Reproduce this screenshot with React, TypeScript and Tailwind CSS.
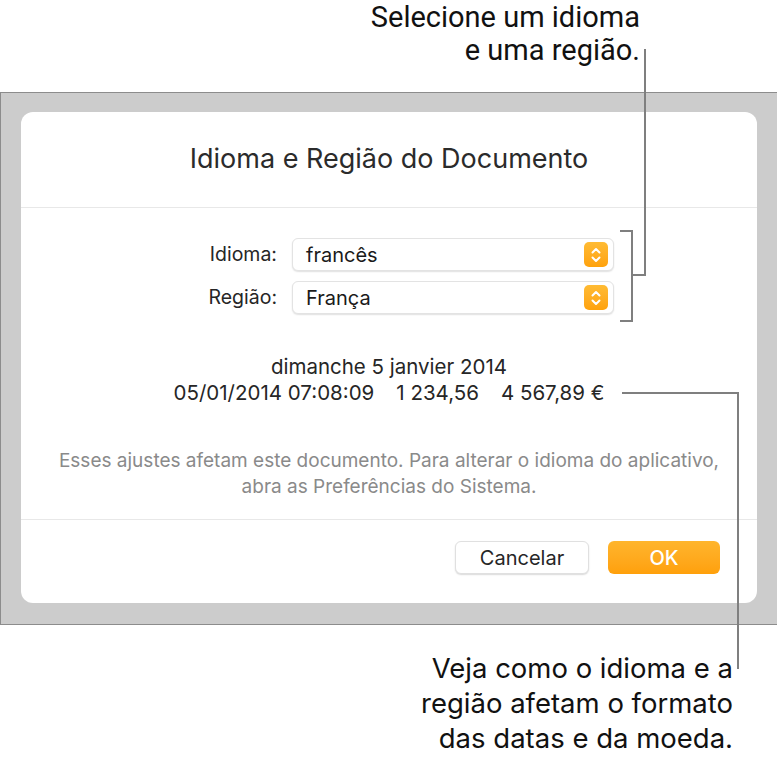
/**
 * Diálogo "Idioma e Região do Documento" com chamadas explicativas
 */

function Stepper() {
  return (
    <span className="flex h-[25px] w-[24px] items-center justify-center rounded-[5px] bg-gradient-to-b from-[#ffbb33] to-[#ffa20a]">
      <svg className="h-[18px] w-[12px]" viewBox="0 0 12 18" fill="none" stroke="white" strokeWidth={2} strokeLinecap="round" strokeLinejoin="round">
        <path d="M2.5 6.5 6 3l3.5 3.5" />
        <path d="M2.5 11.5 6 15l3.5-3.5" />
      </svg>
    </span>
  );
}

function PopupRow({ label, value }: { label: string; value: string }) {
  return (
    <div className="flex items-center">
      <span className="w-[117px] pr-[15px] text-right text-[19.5px] text-[#262626]">{label}</span>
      <div className="flex h-[33px] w-[322px] items-center justify-between rounded-[6px] border border-[#e3e3e3] bg-white pl-[13px] pr-[5px] shadow-[0_1px_1.5px_rgba(0,0,0,0.12)]">
        <span className="text-[20px] text-[#1a1a1a]">{value}</span>
        <Stepper />
      </div>
    </div>
  );
}

export default function App() {
  return (
    <div className="relative h-[764px] w-[777px] overflow-hidden bg-white font-['Inter',sans-serif]">
      {/* Chamada superior */}
      <div className="flex h-[92px] flex-col items-end pr-[137px] pt-[1px] font-['Roboto',sans-serif] text-[29px] leading-[33px] text-[#111]">
        <span>Selecione um idioma</span>
        <span>e uma região.</span>
      </div>

      {/* Fundo cinza */}
      <div className="border-y border-l border-[#8c8c8c] bg-[#cccccc] pb-[21px] pl-[20px] pr-[20px] pt-[19px]">
        <div className="flex h-[491px] flex-col rounded-[12px] bg-white">
          <div className="flex h-[95px] items-center justify-center">
            <h1 className="text-[27px] text-[#2b2b2b]">Idioma e Região do Documento</h1>
          </div>
          <div className="h-px bg-[#e8e8e8]" />

          <div className="flex flex-col items-start gap-[10px] pl-[154px] pt-[30px]">
            <PopupRow label="Idioma:" value="francês" />
            <PopupRow label="Região:" value="França" />
          </div>

          <div className="mt-[40px] flex flex-col items-center text-[20.5px] leading-[26px] text-[#262626]">
            <span>dimanche 5 janvier 2014</span>
            <span className="flex gap-[22px]">
              <span>05/01/2014 07:08:09</span>
              <span>1 234,56</span>
              <span>4 567,89 €</span>
            </span>
          </div>

          <div className="mt-[42px] flex flex-col items-center text-[19px] leading-[26px] text-[#8a8a8a]">
            <span>Esses ajustes afetam este documento. Para alterar o idioma do aplicativo,</span>
            <span>abra as Preferências do Sistema.</span>
          </div>

          <div className="mt-[19px] h-px bg-[#e8e8e8]" />

          <div className="flex justify-end gap-[19px] pr-[37px] pt-[21px]">
            <button className="h-[33px] w-[134px] rounded-[6px] border border-[#e0e0e0] bg-white text-[20px] text-[#262626] shadow-[0_1px_1.5px_rgba(0,0,0,0.15)]">
              Cancelar
            </button>
            <button className="h-[33px] w-[112px] rounded-[6px] bg-gradient-to-b from-[#ffb52c] to-[#ffa00a] text-[20px] font-medium text-white">
              OK
            </button>
          </div>
        </div>
      </div>

      {/* Chamada inferior */}
      <div className="flex flex-col items-end pr-[44px] pt-[26px] text-[27.5px] leading-[35px] text-[#111]">
        <span>Veja como o idioma e a</span>
        <span>região afetam o formato</span>
        <span>das datas e da moeda.</span>
      </div>

      {/* Linhas de chamada */}
      <div className="absolute left-[644px] top-[49px] h-[227px] w-[2px] bg-[#7f7f7f]" />
      <div className="absolute left-[631px] top-[274px] h-[2px] w-[15px] bg-[#7f7f7f]" />
      <div className="absolute left-[631px] top-[230px] h-[92px] w-[2px] bg-[#7f7f7f]" />
      <div className="absolute left-[620px] top-[230px] h-[2px] w-[12px] bg-[#7f7f7f]" />
      <div className="absolute left-[620px] top-[320px] h-[2px] w-[12px] bg-[#7f7f7f]" />
      <div className="absolute left-[622px] top-[392px] h-[2px] w-[117px] bg-[#7f7f7f]" />
      <div className="absolute left-[737px] top-[392px] h-[277px] w-[2px] bg-[#7f7f7f]" />
    </div>
  );
}
